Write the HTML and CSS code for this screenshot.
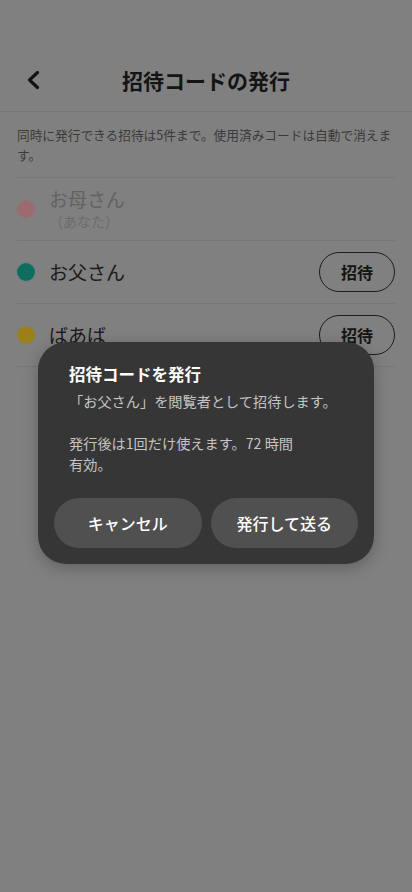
FILE: index.html
```html
<!DOCTYPE html>
<html lang="ja">
<head>
  <meta charset="UTF-8">
  <title>招待コードの発行</title>
  <link rel="stylesheet" href="styles.css">
</head>
<body>
  <div class="page">
    <header class="top-bar">
      <button class="back-btn" aria-label="戻る">
        <svg width="16" height="20" viewBox="0 0 16 20">
          <path d="M11.5 2.5 L3.5 10 L11.5 17.5" fill="none" stroke="#141414" stroke-width="3.2" stroke-linecap="round" stroke-linejoin="round"/>
        </svg>
      </button>
      <h1>招待コードの発行</h1>
    </header>

    <p class="info">同時に発行できる招待は5件まで。使用済みコードは自動で消えます。</p>

    <ul class="member-list">
      <li class="member me">
        <span class="dot pink"></span>
        <div class="member-name">
          <span>お母さん</span>
          <small>（あなた）</small>
        </div>
      </li>
      <li class="member">
        <span class="dot teal"></span>
        <div class="member-name"><span>お父さん</span></div>
        <button class="invite-btn">招待</button>
      </li>
      <li class="member">
        <span class="dot yellow"></span>
        <div class="member-name"><span>ばあば</span></div>
        <button class="invite-btn">招待</button>
      </li>
    </ul>
  </div>

  <div class="dialog">
    <h2>招待コードを発行</h2>
    <p>「お父さん」を閲覧者として招待します。</p>
    <p class="blank">&nbsp;</p>
    <p>発行後は1回だけ使えます。72 時間<br>有効。</p>
    <div class="dialog-actions">
      <button class="dialog-btn">キャンセル</button>
      <button class="dialog-btn">発行して送る</button>
    </div>
  </div>
</body>
</html>
```

FILE: styles.css
```css
body {
  font-family: 'Noto Sans CJK JP', 'Noto Sans', sans-serif;
  background-color: #808080;
  margin: 0;
  color: #141414;
  width: 412px;
  height: 892px;
  position: relative;
  overflow: hidden;
}

button {
  font-family: inherit;
  cursor: pointer;
}

.top-bar {
  display: flex;
  align-items: center;
  justify-content: center;
  position: relative;
  margin-top: 49px;
  height: 62px;
  border-bottom: 1px solid #767676;
}

.top-bar h1 {
  margin: 0;
  font-size: 21px;
  font-weight: 700;
  line-height: 28px;
}

.back-btn {
  position: absolute;
  left: 26px;
  top: 21px;
  background: none;
  border: none;
  padding: 0;
  width: 16px;
  height: 20px;
}

.info {
  margin: 0 17px;
  padding: 13px 0 12px;
  font-size: 12.7px;
  line-height: 20px;
  color: #3a3a3a;
  border-bottom: 1px solid #767676;
}

.member-list {
  list-style: none;
  margin: 0 17px;
  padding: 0;
}

.member {
  display: flex;
  align-items: center;
  height: 62px;
  border-bottom: 1px solid #767676;
}

.dot {
  width: 18px;
  height: 18px;
  border-radius: 50%;
  margin-right: 14px;
  flex-shrink: 0;
}

.pink { background-color: #9b6b70; }
.teal { background-color: #0d6e60; }
.yellow { background-color: #9a7f1a; }

.member-name {
  flex: 1;
  display: flex;
  flex-direction: column;
  font-size: 19px;
  line-height: 24px;
  color: #1a1a1a;
}

.me .member-name {
  color: #626262;
  margin-top: -1px;
}

.member-name small {
  font-size: 14px;
  line-height: 20px;
  color: #6c6c6c;
}

.invite-btn {
  width: 76px;
  height: 40px;
  border: 1.5px solid #1c1c1c;
  border-radius: 20px;
  background: transparent;
  font-size: 16px;
  font-weight: 700;
  color: #141414;
  padding: 0;
}

.dialog {
  position: absolute;
  left: 38px;
  top: 342px;
  width: 336px;
  box-sizing: border-box;
  padding: 20px 16px 16px;
  background-color: #363636;
  border-radius: 28px;
  box-shadow: 0 4px 16px rgba(0,0,0,0.25);
}

.dialog h2 {
  margin: 0 15px 5px;
  font-size: 16.5px;
  font-weight: 700;
  line-height: 24px;
  color: #ffffff;
}

.dialog p {
  margin: 0 15px;
  font-size: 14.2px;
  line-height: 21px;
  color: #c4c4c4;
}

.dialog-actions {
  display: flex;
  gap: 9px;
  margin-top: 23px;
}

.dialog-btn {
  flex: 1;
  height: 50px;
  border: none;
  border-radius: 25px;
  background-color: #505050;
  color: #ffffff;
  font-size: 16px;
  font-weight: 500;
  padding: 0;
}
```
